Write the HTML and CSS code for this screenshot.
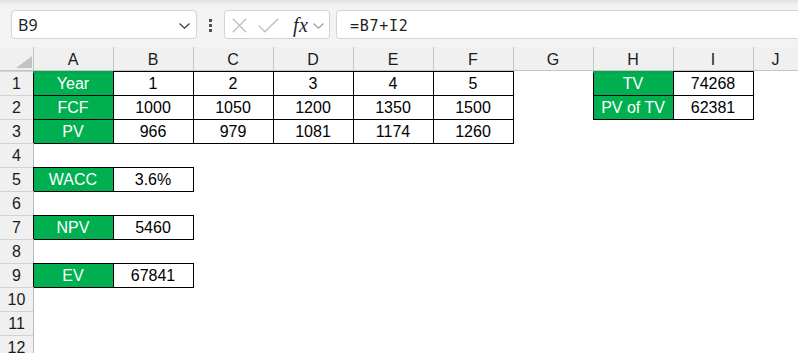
FILE: index.html
```html
<!DOCTYPE html>
<html>
<head>
<meta charset="utf-8">
<link rel="stylesheet" href="styles.css">
</head>
<body>
<div class="toolbar">
  <div class="namebox">
    <span class="name">B9</span>
    <svg class="chev" width="11" height="6" viewBox="0 0 11 6"><path d="M0.5 0.5 L5.5 5.2 L10.5 0.5" fill="none" stroke="#3a3a3a" stroke-width="1.2"/></svg>
  </div>
  <div class="grip"><span></span><span></span><span></span></div>
  <div class="fxbox">
    <svg class="xicon" width="15" height="15" viewBox="0 0 15 15"><path d="M0.8 0.8 L14.2 14.2 M14.2 0.8 L0.8 14.2" stroke="#bdbdbd" stroke-width="1.3" fill="none"/></svg>
    <svg class="check" width="21" height="15" viewBox="0 0 21 15"><path d="M0.8 7.6 L6.8 13.8 L20.2 0.8" stroke="#bdbdbd" stroke-width="1.3" fill="none"/></svg>
    <span class="fx">fx</span>
    <svg class="chev2" width="11" height="6" viewBox="0 0 11 6"><path d="M0.5 0.5 L5.5 5.2 L10.5 0.5" fill="none" stroke="#9a9a9a" stroke-width="1.1"/></svg>
  </div>
  <div class="formula">=B7+I2</div>
</div>

<div class="sheet">
  <div class="corner"><svg width="16" height="12" viewBox="0 0 16 12"><polygon points="16,0 16,12 0,12" fill="#c3c3c3"/></svg></div>
  <div class="ch sel">A</div><div class="ch">B</div><div class="ch">C</div><div class="ch">D</div><div class="ch">E</div><div class="ch">F</div><div class="ch">G</div><div class="ch sel">H</div><div class="ch">I</div><div class="ch">J</div>

  <div class="rh">1</div>
  <div class="c b g">Year</div><div class="c b">1</div><div class="c b">2</div><div class="c b">3</div><div class="c b">4</div><div class="c b">5</div><div class="c"></div><div class="c b g">TV</div><div class="c b">74268</div><div class="c"></div>

  <div class="rh">2</div>
  <div class="c b g">FCF</div><div class="c b">1000</div><div class="c b">1050</div><div class="c b">1200</div><div class="c b">1350</div><div class="c b">1500</div><div class="c"></div><div class="c b g">PV of TV</div><div class="c b">62381</div><div class="c"></div>

  <div class="rh">3</div>
  <div class="c b g">PV</div><div class="c b">966</div><div class="c b">979</div><div class="c b">1081</div><div class="c b">1174</div><div class="c b">1260</div><div class="c"></div><div class="c"></div><div class="c"></div><div class="c"></div>

  <div class="rh">4</div>
  <div class="c"></div><div class="c"></div><div class="c"></div><div class="c"></div><div class="c"></div><div class="c"></div><div class="c"></div><div class="c"></div><div class="c"></div><div class="c"></div>

  <div class="rh">5</div>
  <div class="c b g">WACC</div><div class="c b">3.6%</div><div class="c"></div><div class="c"></div><div class="c"></div><div class="c"></div><div class="c"></div><div class="c"></div><div class="c"></div><div class="c"></div>

  <div class="rh">6</div>
  <div class="c"></div><div class="c"></div><div class="c"></div><div class="c"></div><div class="c"></div><div class="c"></div><div class="c"></div><div class="c"></div><div class="c"></div><div class="c"></div>

  <div class="rh">7</div>
  <div class="c b g">NPV</div><div class="c b">5460</div><div class="c"></div><div class="c"></div><div class="c"></div><div class="c"></div><div class="c"></div><div class="c"></div><div class="c"></div><div class="c"></div>

  <div class="rh">8</div>
  <div class="c"></div><div class="c"></div><div class="c"></div><div class="c"></div><div class="c"></div><div class="c"></div><div class="c"></div><div class="c"></div><div class="c"></div><div class="c"></div>

  <div class="rh">9</div>
  <div class="c b g">EV</div><div class="c b">67841</div><div class="c"></div><div class="c"></div><div class="c"></div><div class="c"></div><div class="c"></div><div class="c"></div><div class="c"></div><div class="c"></div>

  <div class="rh">10</div>
  <div class="c"></div><div class="c"></div><div class="c"></div><div class="c"></div><div class="c"></div><div class="c"></div><div class="c"></div><div class="c"></div><div class="c"></div><div class="c"></div>

  <div class="rh">11</div>
  <div class="c"></div><div class="c"></div><div class="c"></div><div class="c"></div><div class="c"></div><div class="c"></div><div class="c"></div><div class="c"></div><div class="c"></div><div class="c"></div>

  <div class="rh">12</div>
  <div class="c"></div><div class="c"></div><div class="c"></div><div class="c"></div><div class="c"></div><div class="c"></div><div class="c"></div><div class="c"></div><div class="c"></div><div class="c"></div>
</div>
</body>
</html>
```

FILE: styles.css
```css
html, body {
  margin: 0;
  padding: 0;
  overflow: hidden;
  background: #ffffff;
  width: 798px;
  height: 353px;
}

.toolbar {
  height: 47px;
  box-sizing: border-box;
  padding: 10px 0 0 11px;
  display: flex;
  align-items: flex-start;
  background: linear-gradient(to bottom, #e0e0e0 0px, #f3f3f3 5px);
  font-family: "Noto Sans", "Open Sans", sans-serif;
}

.namebox {
  width: 186px;
  height: 29px;
  box-sizing: border-box;
  background: #fff;
  border: 1px solid #d4d4d4;
  border-radius: 4px;
  display: flex;
  align-items: center;
  padding: 0 6px 0 6px;
}

.name {
  font-size: 16px;
  color: #1f1f1f;
  flex: 1;
  line-height: 1;
  padding-top: 1px;
}

.chev {
  margin-right: 0;
  margin-top: 2px;
}

.grip {
  width: 3px;
  margin: 9px 12px 0 12px;
  display: flex;
  flex-direction: column;
  gap: 2px;
}

.grip span {
  display: block;
  width: 3px;
  height: 3px;
  background: #505050;
}

.fxbox {
  width: 106px;
  height: 29px;
  box-sizing: border-box;
  background: #fff;
  border: 1px solid #d4d4d4;
  border-radius: 4px;
  display: flex;
  align-items: center;
  padding-left: 7px;
}

.xicon {
  margin-top: 1px;
}

.check {
  margin-left: 11px;
  margin-top: 1px;
}

.fx {
  margin-left: 14px;
  font-family: "Liberation Serif", "DejaVu Serif", serif;
  font-style: italic;
  font-size: 20px;
  color: #262626;
  line-height: 1;
  letter-spacing: 0.5px;
}

.chev2 {
  margin-left: 5px;
  margin-top: 2px;
}

.formula {
  flex: 1;
  height: 29px;
  box-sizing: border-box;
  margin-left: 6px;
  margin-right: -12px;
  background: #fff;
  border: 1px solid #d4d4d4;
  border-radius: 4px;
  padding-left: 13px;
  display: flex;
  align-items: center;
  font-family: "DejaVu Sans Mono", "Liberation Mono", monospace;
  font-size: 15px;
  letter-spacing: 0.7px;
  color: #1f1f1f;
  padding-top: 2px;
}

.sheet {
  display: grid;
  grid-template-columns: 33px repeat(9, 80px) 1fr;
  grid-auto-rows: 24px;
  font-family: "Liberation Sans", Arial, sans-serif;
  font-size: 16px;
  color: #000;
}

.corner {
  background: #f0f0f0;
  box-shadow: inset 0 -1px 0 #c4c4c4;
  display: flex;
  align-items: flex-end;
  justify-content: flex-end;
  padding: 0 1px 3px 0;
}

.ch {
  position: relative;
  background: #f0f0f0;
  box-shadow: inset 1px 0 0 #c6c6c6, inset 0 -1px 0 #c4c4c4;
  display: flex;
  align-items: center;
  justify-content: center;
  padding-top: 2px;
  color: #1a1a1a;
}

.ch.sel::after {
  content: "";
  position: absolute;
  left: 0;
  right: 0;
  bottom: -2px;
  height: 2px;
  background: #00a651;
}

.rh {
  background: #f0f0f0;
  box-shadow: inset 0 1px 0 #d2d2d2, 1px 0 0 #b8b8b8;
  display: flex;
  align-items: center;
  justify-content: center;
  padding-top: 2px;
  color: #1a1a1a;
}

.c {
  display: flex;
  align-items: center;
  justify-content: center;
  padding-top: 2px;
  white-space: nowrap;
}

.b {
  background: #fff;
  box-shadow: inset 1px 1px 0 #000, 1px 0 0 #000, 0 1px 0 #000, 1px 1px 0 #000;
}

.g {
  background: #00b050;
  color: #ffffff;
}
```
